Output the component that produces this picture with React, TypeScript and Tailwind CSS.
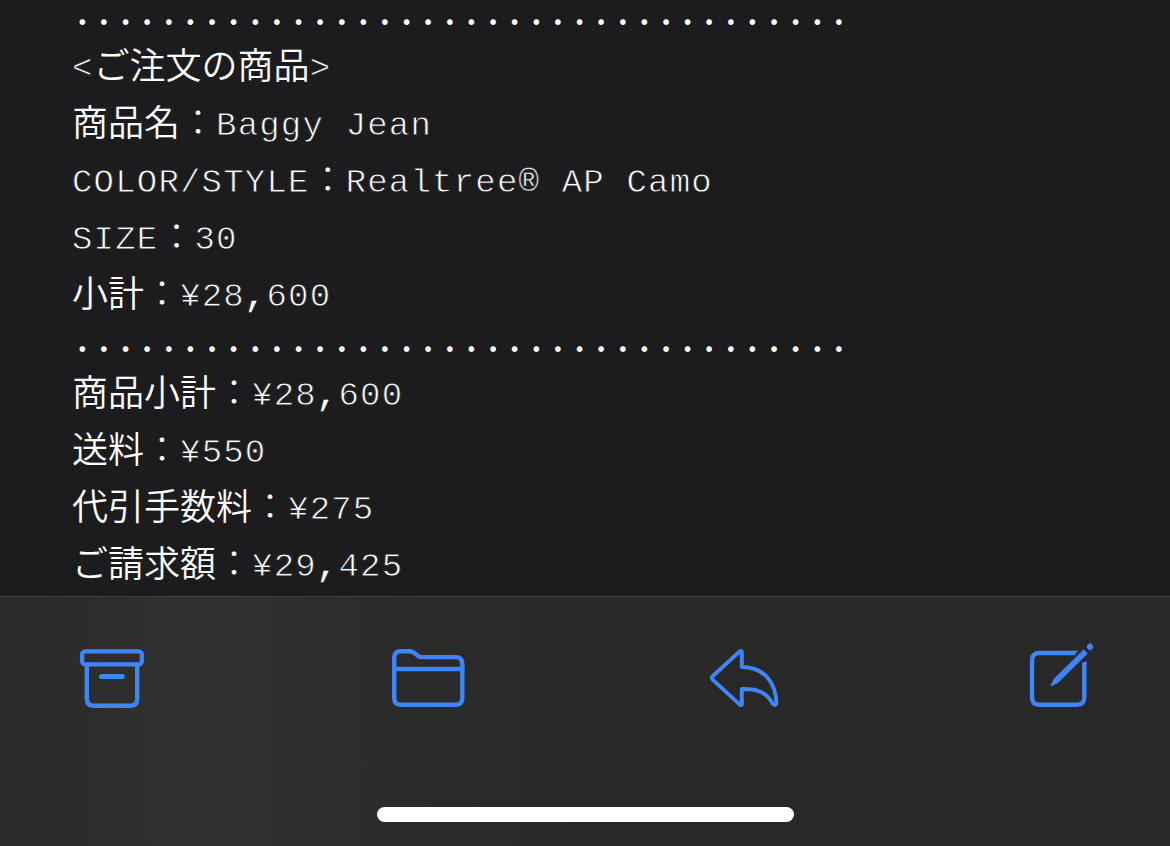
import type { ReactNode } from "react";

const dots = ".".repeat(36);

function Mono({ children }: { children: ReactNode }) {
  return (
    <span className="relative -top-px font-['Liberation_Mono','Noto_Sans_CJK_JP',monospace] text-[34px] tracking-[1.2px] font-normal [-webkit-text-stroke:0.8px_#1c1c1e]">
      {children}
    </span>
  );
}

function Comma() {
  return <span className="[-webkit-text-stroke:0.3px_#ffffff]">,</span>;
}

function Colon() {
  return <span className="font-light">：</span>;
}

function Row({ children }: { children: ReactNode }) {
  return <div className="h-[57px] leading-[57px]">{children}</div>;
}

function Dots() {
  return (
    <div className="h-[42px] pl-[4.5px] text-[42px] leading-[25px] font-normal tracking-[9.94px]">
      {dots}
    </div>
  );
}

function Icon({ children }: { children: ReactNode }) {
  return (
    <button className="h-[100px] w-[110px]">
      <svg
        width="110"
        height="100"
        viewBox="0 0 110 100"
        fill="none"
        stroke="#3f85f5"
        strokeWidth="4.4"
        strokeLinecap="round"
        strokeLinejoin="round"
      >
        {children}
      </svg>
    </button>
  );
}

export default function App() {
  return (
    <div className="flex h-[846px] w-[1170px] flex-col overflow-hidden bg-[#1c1c1e]">
      <main className="h-[596px] whitespace-pre pl-[72px] font-['Noto_Sans_CJK_JP',sans-serif] text-[36px] font-[350] text-white">
        <div className="-mt-[7px]">
          <Dots />
          <Row>
            <Mono>{"<"}</Mono>ご注文の商品<Mono>{">"}</Mono>
          </Row>
          <Row>
            商品名
            <Colon />
            <Mono>Baggy Jean</Mono>
          </Row>
          <Row>
            <Mono>COLOR/STYLE</Mono>
            <Colon />
            <Mono>
              Realtree
              <span className="[-webkit-text-stroke:0.5px_#1c1c1e]">®</span>
              {" AP Camo"}
            </Mono>
          </Row>
          <Row>
            <Mono>SIZE</Mono>
            <Colon />
            <Mono>30</Mono>
          </Row>
          <Row>
            小計
            <Colon />
            <Mono>
              ¥28
              <Comma />
              600
            </Mono>
          </Row>
          <Dots />
          <Row>
            商品小計
            <Colon />
            <Mono>
              ¥28
              <Comma />
              600
            </Mono>
          </Row>
          <Row>
            送料
            <Colon />
            <Mono>¥550</Mono>
          </Row>
          <Row>
            代引手数料
            <Colon />
            <Mono>¥275</Mono>
          </Row>
          <Row>
            ご請求額
            <Colon />
            <Mono>
              ¥29
              <Comma />
              425
            </Mono>
          </Row>
        </div>
      </main>

      <footer className="flex h-[250px] flex-col border-t border-[#414143] bg-linear-to-r from-[#2a2a2a] via-[#303030] via-17% to-[#282828] to-50%">
        <div className="flex gap-[206px] pt-[33px] pl-[57px]">
          <Icon>
            <rect x="25.1" y="21.4" width="59.8" height="13" rx="3.5" />
            <path d="M29.8 34.5V68.5Q29.8 75.8 37 75.8H73Q80.2 75.8 80.2 68.5V34.5" />
            <path d="M44.5 46.5H65.2" strokeWidth="5" />
          </Icon>
          <Icon>
            <path d="M21.2 68V28Q21.2 21.2 28 21.2H36.5Q39.2 21.2 41 22.7L45.3 26Q46.7 27.1 49 27.1H82.5Q89.3 27.1 89.3 34V68Q89.3 74.7 82.5 74.7H28Q21.2 74.7 21.2 68Z" />
            <path d="M21.2 39H89.3" />
          </Icon>
          <Icon>
            <path
              d="M50.6 21.6L23.6 46.2Q22.3 47.8 23.6 49.6L50.6 74.4Q52.8 76 52.8 73.5V59C70 58.6 77.5 63 84 74Q87.2 76.3 87.4 73C86.8 52 75 37.3 52.8 37V22.5Q52.8 20 50.6 21.6Z"
              strokeWidth="4"
            />
          </Icon>
          <Icon>
            <path
              d="M70.2 23H34.5Q27 23 27 30.5V67.3Q27 74.8 34.5 74.8H71.7Q79.3 74.8 79.3 67.3V32.5"
              strokeLinecap="butt"
            />
            <path
              d="M69 20.8H73.2L69 25.2ZM77.1 34.6L81.5 30.4V34.6Z"
              fill="#3f85f5"
              stroke="none"
            />
            <path
              d="M78.9 19.9L82.3 23.4L52.8 52.7L46.4 55.8Q45.7 55.6 46 54.9L49.4 48.8Z"
              fill="#3f85f5"
              strokeWidth="0.8"
            />
            <rect
              x="82.2"
              y="14.1"
              width="5.6"
              height="5.4"
              rx="2"
              transform="rotate(45 85 16.8)"
              fill="#3f85f5"
              strokeWidth="0.6"
            />
          </Icon>
        </div>
        <div className="mt-[77px] ml-[377px] h-[15px] w-[417px] rounded-full bg-white" />
      </footer>
    </div>
  );
}
